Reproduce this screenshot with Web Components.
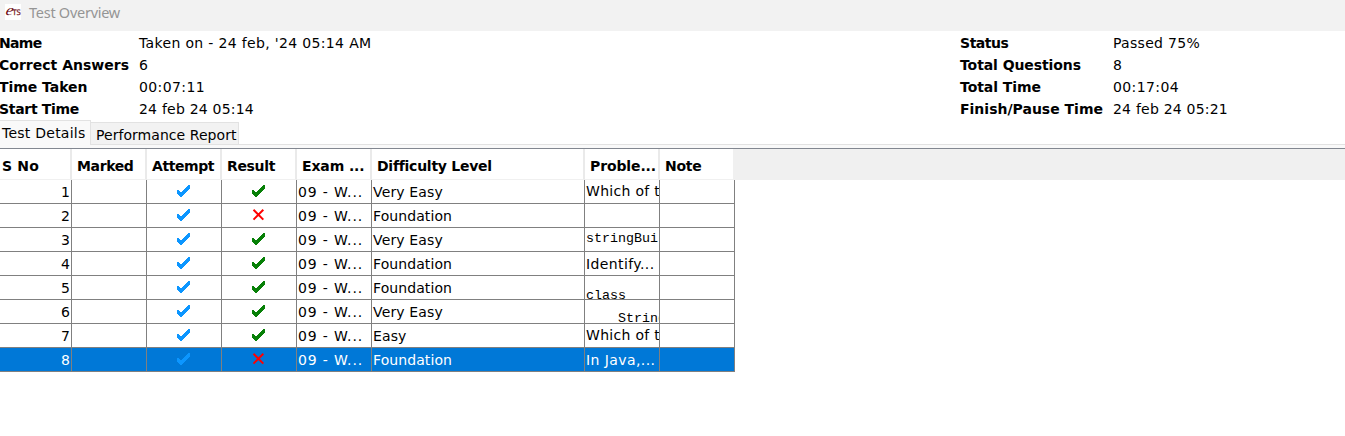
<!DOCTYPE html>
<html lang="en"><head><meta charset="utf-8"><title>Test Overview</title>
<style>html,body{margin:0;height:100%;background:#fff;overflow:hidden}body{font:14px/22px "DejaVu Sans",sans-serif;color:#000}</style></head>
<body><test-overview></test-overview>
<script>
// Single-line label; letter spacing is tuned so the text spans the width given in "w".
class FitText extends HTMLElement{
  connectedCallback(){
    if(this.shadowRoot)return;
    this.attachShadow({mode:'open'}).innerHTML='<style>:host{display:inline-block;white-space:pre;text-align:left}</style><slot></slot>';
    const w=+this.getAttribute('w');
    if(w){
      const r=document.createRange();r.selectNodeContents(this);
      const now=r.getBoundingClientRect().width;
      this.style.letterSpacing=((w-now)/this.textContent.length)+'px';
    }
  }
}
customElements.define('fit-text',FitText);

class MarkIcon extends HTMLElement{
  connectedCallback(){
    if(this.shadowRoot)return;
    const k=this.getAttribute('kind');
    const shape=k==='cross'
      ?'<path d="M1.5 0.8L11.3 10.6M11.3 0.8L1.5 10.6" fill="none" stroke="red" stroke-width="2"/>'
      :'<path d="M0 5H1.4L4.1 7.6L11.6 0.3H13V3.2L4.6 12H3.4L0 8.7Z" shape-rendering="crispEdges" fill="'+(k==='blue'?'#0c96ff':'#078007')+'"/>';
    this.attachShadow({mode:'open'}).innerHTML='<style>:host{display:block;width:14px;height:13px}svg{display:block;overflow:visible}</style><svg width="14" height="13" viewBox="0 0 14 13">'+shape+'</svg>';
  }
}
customElements.define('mark-icon',MarkIcon);

class TitleBar extends HTMLElement{
  connectedCallback(){
    this.attachShadow({mode:'open'}).innerHTML=`<style>
    :host{display:flex;height:31px;background:#f2f2f2;box-sizing:border-box;padding:4px 0 0 5px;color:#959595}
    svg{width:16px;height:16px;background:#fff;flex:none;overflow:visible}
    fit-text{margin:-2px 0 0 8px;font:14.5px/20px "Noto Sans","Open Sans",sans-serif}</style>
    <svg viewBox="0 0 16 16" fill="#6e0c12"><text transform="translate(0 11) scale(1.12 1) skewX(-12)" font-family="Liberation Serif,serif" font-style="italic" font-size="15">e</text><text x="7.4" y="11" font-family="DejaVu Sans,sans-serif" font-size="7.5" stroke="#6e0c12" stroke-width=".25" textLength="8.3" lengthAdjust="spacingAndGlyphs">TS</text></svg>
    <fit-text w="91">Test Overview</fit-text>`;
  }
}
customElements.define('title-bar',TitleBar);

class SummaryPanel extends HTMLElement{
  connectedCallback(){
    const left=[['Name',42.5,"Taken on - 24 feb, '24 05:14 AM",232.5],['Correct Answers',130,'6',9],['Time Taken',88.5,'00:07:11',66],['Start Time',80,'24 feb 24 05:14',115]];
    const right=[['Status',48.5,'Passed 75%',87],['Total Questions',121,'8',9],['Total Time',81,'00:17:04',66],['Finish/Pause Time',143,'24 feb 24 05:21',115]];
    const list=(rows,c)=>`<dl class="${c}">`+rows.map(r=>`<dt><fit-text w="${r[1]}">${r[0]}</fit-text></dt><dd><fit-text w="${r[3]}">${r[2]}</fit-text></dd>`).join('')+'</dl>';
    this.attachShadow({mode:'open'}).innerHTML=`<style>
    :host{display:grid;grid-template-columns:960px 385px;height:89px;padding-top:1px;box-sizing:border-box}
    dl{display:grid;grid-auto-rows:22px;margin:0}
    .l{grid-template-columns:139px 1fr}.r{grid-template-columns:153px 1fr}
    dt{font-weight:bold}dt,dd{margin:0;line-height:22px;height:22px}fit-text{display:block}
    .l dt{margin-left:-1px}</style>`+list(left,'l')+list(right,'r');
  }
}
customElements.define('summary-panel',SummaryPanel);

class TabStrip extends HTMLElement{
  connectedCallback(){
    this.attachShadow({mode:'open'}).innerHTML=`<style>
    :host{display:flex;align-items:flex-end;height:28px;box-sizing:border-box;padding-bottom:3px;background:linear-gradient(#fff 24px,#e2e2e2 24px,#e2e2e2 25px,#f9f9f9 25px)}
    div{box-sizing:border-box;border:1px solid #e2e2e2}
    .on{width:91px;height:25px;background:#f9f9f9;border-left:0;border-bottom:0;padding:1px 0 0 2px}
    .off{width:148px;height:23px;background:#f2f2f2;border-left:0;padding:1px 0 0 5px;}
    fit-text{display:block;line-height:22px}</style>
    <div class="on"><fit-text w="83.5">Test Details</fit-text></div><div class="off"><fit-text w="140.5">Performance Report</fit-text></div>`;
  }
}
customElements.define('tab-strip',TabStrip);

class ResultTable extends HTMLElement{
  connectedCallback(){
    const heads=[['S No',37,2],['Marked',56.5,5],['Attempt',62,5],['Result',48,5],['Exam ...',62.5,5],['Difficulty Level',113.5,5],['Proble...',66,5],['Note',36.5,5]];
    const vw={'Very Easy':70,'Foundation':79,'Easy':33.5};
    const rows=[
      ['Very Easy',1,'Which of t',74,'up'],['Foundation',0,'',0,''],['Very Easy',1,'stringBui',72,'mono m3'],['Foundation',1,'Identify...',68.5,''],
      ['Foundation',1,'class',40,'mono m5'],['Very Easy',1,'    String',80,'mono m6'],['Easy',1,'Which of t',74,'up'],['Foundation',0,'In Java,...',69.5,'']];
    this.attachShadow({mode:'open'}).innerHTML=`<style>
    :host{display:block;border-top:1px solid #828790}
    .head,.row{display:grid;grid-template-columns:72px 75px 75px 75px 75px 213px 75px 75px}
    .head{background:#f0f0f0;height:31px;font-weight:bold}
    .head div{background:#fff;border-right:2px solid #eaeaea;border-bottom:1px solid #f0f0f0;box-sizing:border-box;height:31px;overflow:hidden;margin-right:0;line-height:34px}
    .head div:last-child{border-right-color:#f0f0f0}
    .row{width:735px;height:24px}
    .row div{box-sizing:border-box;height:24px;border-right:1px solid #808080;border-bottom:1px solid #808080;overflow:hidden;padding-left:1px;line-height:24px}
    .row .n{text-align:right;padding:0 1px 0 0}
    .row .i{padding:5px 0 0 30px}
    .row .up{line-height:22px}
    .row .mono{font:13.33px/20px "Liberation Mono",monospace;padding-left:1px}
    .row .m3{padding-top:1px}.row .m5{padding-top:10px}.row .m6{padding-top:9px}
    .sel{background:#0078d7;color:#fff}
    fit-text{display:block}.n fit-text{display:inline-block;vertical-align:top}</style>
    <div class="head">${heads.map(h=>`<div style="padding-left:${h[2]}px"><fit-text w="${h[1]}">${h[0]}</fit-text></div>`).join('')}</div>`+
    rows.map((r,i)=>`<div class="row${i===7?' sel':''}"><div class="n"><fit-text w="9">${i+1}</fit-text></div><div></div><div class="i"><mark-icon kind="blue"></mark-icon></div><div class="i"><mark-icon kind="${r[1]?'green':'cross'}"></mark-icon></div><div><fit-text w="65">09 - W...</fit-text></div><div><fit-text w="${vw[r[0]]}">${r[0]}</fit-text></div><div class="${r[4]}">${r[2]?`<fit-text w="${r[3]}">${r[2]}</fit-text>`:''}</div><div></div></div>`).join('');
  }
}
customElements.define('result-table',ResultTable);

class TestOverview extends HTMLElement{
  connectedCallback(){
    this.attachShadow({mode:'open'}).innerHTML='<style>:host{display:flex;flex-direction:column}</style><title-bar></title-bar><summary-panel></summary-panel><tab-strip></tab-strip><result-table></result-table>';
  }
}
customElements.define('test-overview',TestOverview);
</script></body></html>
